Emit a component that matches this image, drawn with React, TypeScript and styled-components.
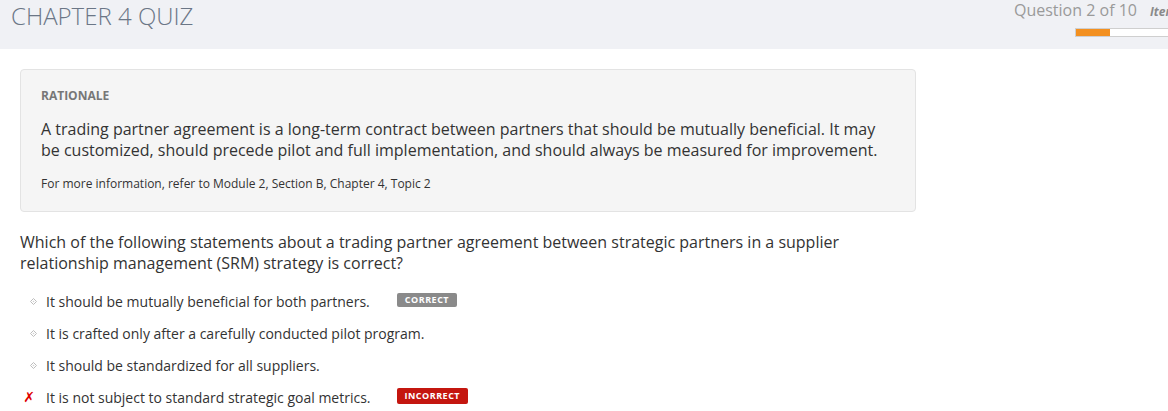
import React from "react";
import styled, { createGlobalStyle } from "styled-components";

const Global = createGlobalStyle`
  html, body { margin: 0; padding: 0; background: #fff; }
  body { font-family: "Open Sans", "Liberation Sans", sans-serif; color: #333; overflow: hidden; }
  * { box-sizing: border-box; }
`;

const Page = styled.div`
  width: 1168px;
  height: 411px;
  overflow: hidden;
`;

const Header = styled.header`
  height: 49px;
  background: #f0f1f5;
  display: flex;
  justify-content: space-between;
  align-items: flex-start;
  padding-left: 11px;
  overflow: hidden;
`;

const Title = styled.h1`
  margin: 0;
  font-size: 24px;
  font-weight: 300;
  color: #6b7686;
  line-height: 32px;
`;

const Status = styled.div`
  display: flex;
  flex-direction: column;
  align-items: flex-start;
  width: 154px;
  flex-shrink: 0;
`;

const StatusLine = styled.div`
  display: flex;
  align-items: baseline;
  gap: 13px;
  white-space: nowrap;
  line-height: 20px;
`;

const QuestionCount = styled.span`
  font-size: 16px;
  color: #9a9a9a;
`;

const ItemLabel = styled.span`
  font-size: 12px;
  font-weight: 700;
  font-style: italic;
  color: #8a8a8a;
`;

const Track = styled.div`
  margin-top: 6px;
  margin-left: 61px;
  width: 120px;
  height: 9px;
  background: #fff;
  border: 1px solid #cfcfcf;
  border-right: none;
  display: flex;
`;

const Fill = styled.div`
  background: #f39020;
  height: 100%;
`;

const Main = styled.main`
  padding: 20px 0 0 20px;
  width: 916px;
`;

const Rationale = styled.section`
  background: #f5f5f5;
  border: 1px solid #e3e3e3;
  border-radius: 4px;
  padding: 18px 20px 17px 20px;
  height: 143px;
`;

const RationaleLabel = styled.div`
  font-size: 12px;
  font-weight: 700;
  color: #777;
  line-height: 16px;
`;

const RationaleText = styled.p`
  margin: 15px 0 0 0;
  font-size: 16px;
  line-height: 21px;
  color: #333;
`;

const MoreInfo = styled.p`
  margin: 15px 0 0 0;
  font-size: 12px;
  line-height: 16px;
  color: #333;
`;

const Question = styled.p`
  margin: 20px 0 0 0;
  font-size: 16px;
  line-height: 21px;
  color: #333;
  width: 850px;
`;

const Options = styled.ul`
  list-style: none;
  margin: 11px 0 0 0;
  padding: 0;
`;

const Option = styled.li`
  display: flex;
  align-items: center;
  height: 32px;
  font-size: 14px;
  color: #333;
`;

const Marker = styled.span`
  width: 26px;
  display: flex;
  justify-content: center;
  align-items: center;
  flex-shrink: 0;
`;

const Cross = styled.span`
  color: #e00000;
  font-size: 14px;
  font-weight: 700;
  font-style: italic;
  font-family: "DejaVu Sans", sans-serif;
  margin-left: -8px;
`;

const OptionText = styled.span`
  margin-right: 27px;
`;

const Badge = styled.span<{ $tone: "correct" | "incorrect" }>`
  display: inline-block;
  font-size: 9px;
  font-weight: 700;
  letter-spacing: 0.5px;
  color: #fff;
  line-height: ${(p) => (p.$tone === "correct" ? "14px" : "16px")};
  padding: 0 8px;
  border-radius: 2px;
  background: ${(p) => (p.$tone === "correct" ? "#8a8a8a" : "#c4160f")};
  margin-top: -2px;
  margin-left: ${(p) => (p.$tone === "correct" ? "0" : "-1px")};
`;

const Diamond = () => (
  <svg width="7" height="7" viewBox="0 0 7 7">
    <path d="M3.5 0.5 L6.5 3.5 L3.5 6.5 L0.5 3.5 Z" fill="none" stroke="#bdbdbd" strokeWidth="1" />
    <circle cx="3.5" cy="3.5" r="0.8" fill="#d0d0d0" />
  </svg>
);

type Opt = { text: string; mark: "none" | "wrong"; badge?: "correct" | "incorrect" };

const options: Opt[] = [
  { text: "It should be mutually beneficial for both partners.", mark: "none", badge: "correct" },
  { text: "It is crafted only after a carefully conducted pilot program.", mark: "none" },
  { text: "It should be standardized for all suppliers.", mark: "none" },
  { text: "It is not subject to standard strategic goal metrics.", mark: "wrong", badge: "incorrect" },
];

export default function App() {
  return (
    <Page>
      <Global />
      <Header>
        <Title>CHAPTER 4 QUIZ</Title>
        <Status>
          <StatusLine>
            <QuestionCount>Question 2 of 10</QuestionCount>
            <ItemLabel>Item</ItemLabel>
          </StatusLine>
          <Track>
            <Fill style={{ width: `${(2 / 10) * 170}px` }} />
          </Track>
        </Status>
      </Header>
      <Main>
        <Rationale>
          <RationaleLabel>RATIONALE</RationaleLabel>
          <RationaleText>
            A trading partner agreement is a long-term contract between partners that should be mutually beneficial. It may
            be customized, should precede pilot and full implementation, and should always be measured for improvement.
          </RationaleText>
          <MoreInfo>For more information, refer to Module 2, Section B, Chapter 4, Topic 2</MoreInfo>
        </Rationale>
        <Question>
          Which of the following statements about a trading partner agreement between strategic partners in a supplier
          relationship management (SRM) strategy is correct?
        </Question>
        <Options>
          {options.map((o) => (
            <Option key={o.text}>
              <Marker>{o.mark === "wrong" ? <Cross>✗</Cross> : <Diamond />}</Marker>
              <OptionText>{o.text}</OptionText>
              {o.badge && <Badge $tone={o.badge}>{o.badge === "correct" ? "CORRECT" : "INCORRECT"}</Badge>}
            </Option>
          ))}
        </Options>
      </Main>
    </Page>
  );
}
